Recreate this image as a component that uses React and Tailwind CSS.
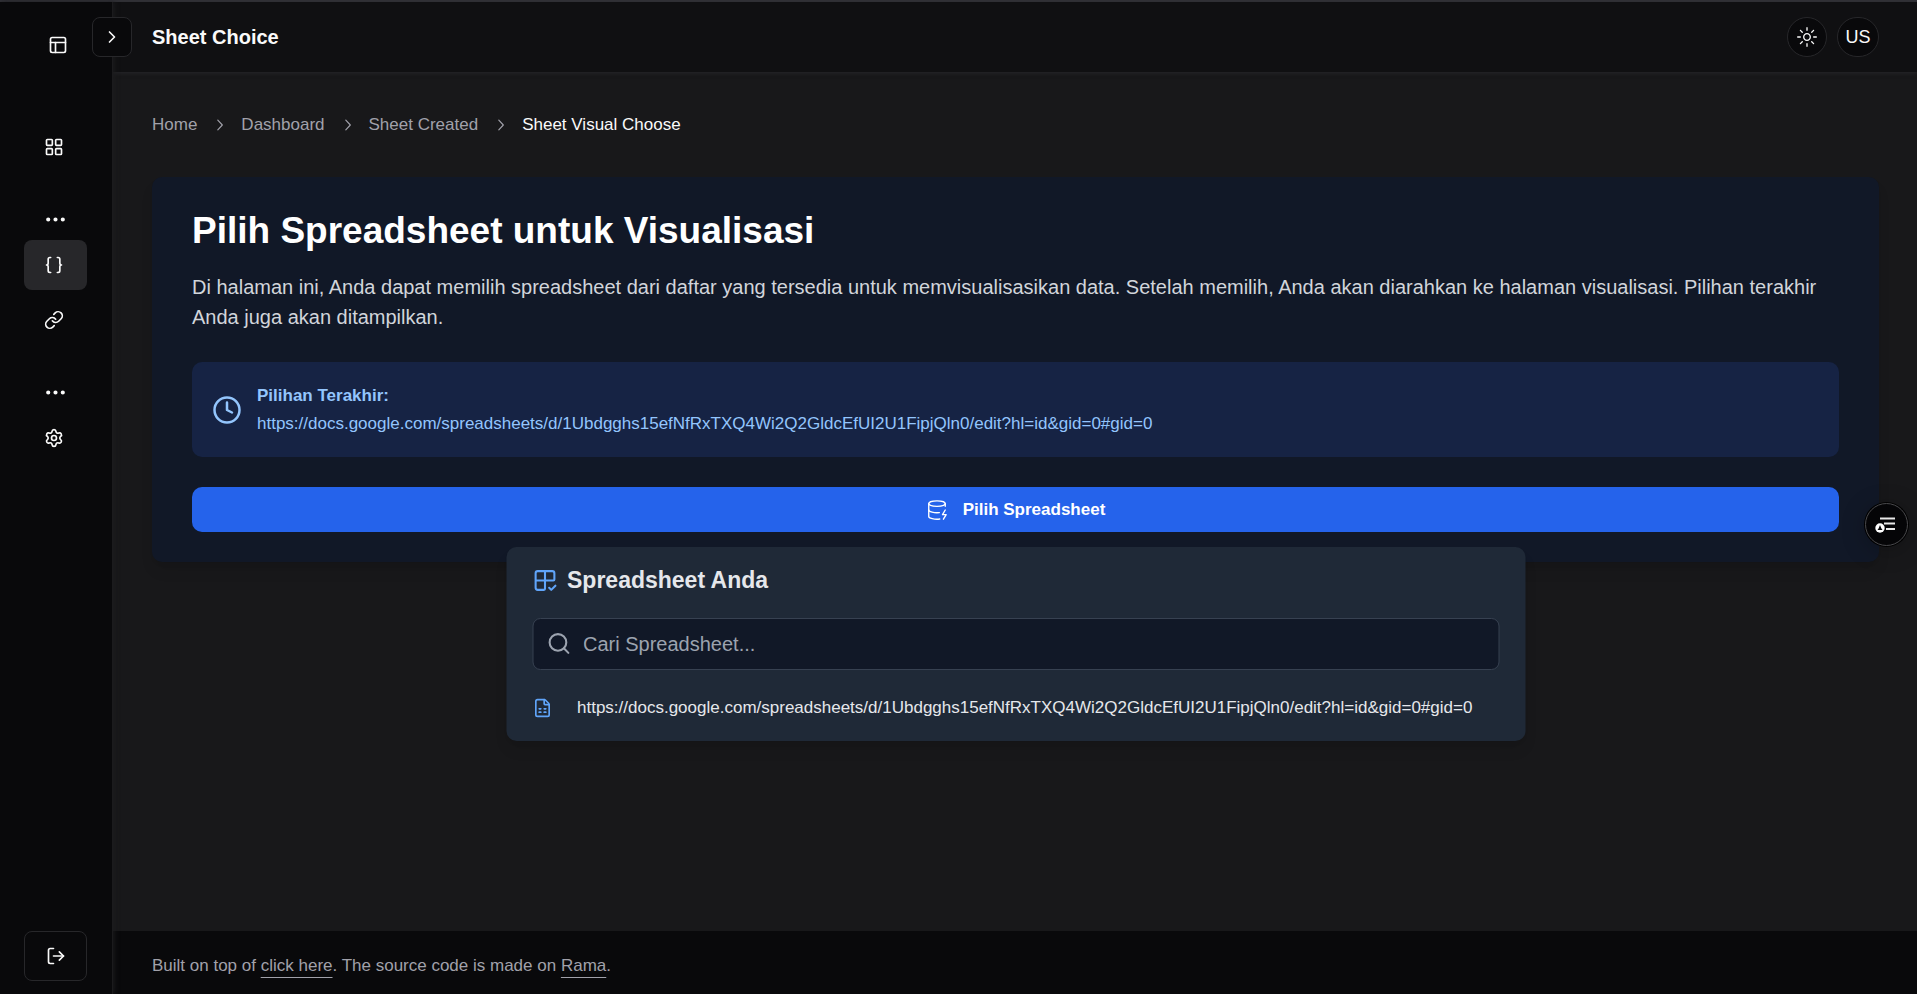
import React from "react";
import {
  PanelsTopLeft,
  LayoutGrid,
  Ellipsis,
  Braces,
  Link as LinkIcon,
  Settings,
  Clock,
  DatabaseZap,
  Grid2x2Check,
  Search,
  FileSpreadsheet,
  ChevronRight,
  LogOut,
} from "lucide-react";
import { RxChevronRight, RxSun } from "react-icons/rx";

const SHEET_URL =
  "https://docs.google.com/spreadsheets/d/1Ubdgghs15efNfRxTXQ4Wi2Q2GldcEfUI2U1FipjQln0/edit?hl=id&gid=0#gid=0";

const crumbs = ["Home", "Dashboard", "Sheet Created"];

function NavItem({ icon: Icon, label, active }) {
  return (
    <a
      href="#"
      aria-label={label}
      className={
        active
          ? "flex h-[50px] items-center rounded-lg bg-[#27272a] pl-5"
          : "flex h-[50px] items-center rounded-lg pl-5"
      }
    >
      <Icon size={20} />
    </a>
  );
}

function GroupDots() {
  return (
    <div className="flex h-[31px] items-center justify-center">
      <Ellipsis size={25} />
    </div>
  );
}

function Sidebar() {
  return (
    <aside className="relative z-20 flex w-[113px] shrink-0 flex-col border-r border-[#1b1b1d] bg-[#09090b] pt-[18px] pr-[25px] pb-[13px] pl-6 shadow-[1px_0_5px_0_#1c1c1f]">
      <a href="#" aria-label="Brand" className="flex h-[50px] items-center justify-center pl-1">
        <PanelsTopLeft size={20} />
      </a>
      <button
        type="button"
        aria-label="Open sidebar"
        className="absolute top-[15px] left-[92px] flex size-10 items-center justify-center rounded-lg border border-[#27272a] bg-[#09090b]"
      >
        <ChevronRight size={20} />
      </button>
      <nav className="mt-[52px] flex flex-1 flex-col">
        <NavItem icon={LayoutGrid} label="Dashboard" />
        <div className="mt-8 flex flex-col gap-[5px]">
          <GroupDots />
          <NavItem icon={Braces} label="Sheet visual" active />
          <NavItem icon={LinkIcon} label="Links" />
        </div>
        <div className="mt-8 flex flex-col gap-[5px]">
          <GroupDots />
          <NavItem icon={Settings} label="Settings" />
        </div>
      </nav>
      <button
        type="button"
        aria-label="Sign out"
        className="flex h-[50px] items-center justify-center rounded-lg border border-[#27272a]"
      >
        <LogOut size={20} />
      </button>
    </aside>
  );
}

function Header() {
  return (
    <header className="relative z-10 flex h-[70px] shrink-0 items-center justify-between bg-[#101012] pr-[38px] pl-[39px] shadow-[0_1px_4px_0_#27272a]">
      <h1 className="text-xl font-bold">Sheet Choice</h1>
      <div className="flex items-center gap-[10px]">
        <button
          type="button"
          aria-label="Toggle theme"
          className="flex size-10 items-center justify-center rounded-full border border-[#27272a] bg-[#09090b]"
        >
          <RxSun size={20} />
        </button>
        <button
          type="button"
          className="flex h-10 w-[42px] items-center justify-center rounded-full border border-[#27272a] bg-[#09090b] text-lg"
        >
          US
        </button>
      </div>
    </header>
  );
}

function Breadcrumb() {
  return (
    <nav aria-label="Breadcrumb">
      <ol className="flex items-center gap-[13px] text-[17px] leading-[25px] text-[#a1a1aa]">
        {crumbs.map((name) => (
          <React.Fragment key={name}>
            <li>
              <a href="#">{name}</a>
            </li>
            <li aria-hidden="true">
              <RxChevronRight size={18} />
            </li>
          </React.Fragment>
        ))}
        <li aria-current="page" className="text-[#fafafa]">
          Sheet Visual Choose
        </li>
      </ol>
    </nav>
  );
}

function SheetMenu() {
  return (
    <div className="absolute top-full left-1/2 mt-[15px] min-w-[1019px] -translate-x-1/2 rounded-[10px] bg-[#1f2937] px-[26px] pt-[18px] pb-[18px] shadow-lg">
      <h3 className="flex items-center gap-[10px] text-[23px] leading-[30px] font-bold text-[#e5e7eb]">
        <Grid2x2Check size={25} className="text-[#60a5fa]" />
        Spreadsheet Anda
      </h3>
      <div className="relative mt-[23px]">
        <Search size={25} className="absolute top-[13px] left-[14px] text-[#9ca3af]" />
        <input
          type="text"
          aria-label="Cari Spreadsheet"
          placeholder="Cari Spreadsheet..."
          className="h-[52px] w-full rounded-lg border border-[#374151] bg-[#111827] pr-4 pl-[50px] text-xl placeholder:text-[#9ca3af] placeholder:opacity-100"
        />
      </div>
      <a href="#" className="mt-[23px] flex items-center text-[17px] leading-[30px] text-[#e5e7eb]">
        <FileSpreadsheet size={20} className="mr-[25px] shrink-0 text-[#60a5fa]" />
        <span className="whitespace-nowrap">{SHEET_URL}</span>
      </a>
    </div>
  );
}

function ChoiceCard() {
  return (
    <section className="mt-10 rounded-[10px] bg-[#111827] px-10 py-[30px] shadow-lg">
      <h2 className="text-[37px] leading-[47px] font-bold text-white">Pilih Spreadsheet untuk Visualisasi</h2>
      <p className="mt-[18px] text-xl leading-[30px] text-[#d1d5db]">
        Di halaman ini, Anda dapat memilih spreadsheet dari daftar yang tersedia untuk memvisualisasikan data. Setelah
        memilih, Anda akan diarahkan ke halaman visualisasi. Pilihan terakhir Anda juga akan ditampilkan.
      </p>
      <div className="mt-[30px] flex items-center gap-[15px] rounded-[10px] bg-[#162344] px-5 pt-5 pb-[19px] text-[#93c5fd]">
        <Clock size={30} />
        <div className="text-[17px] leading-[28px]">
          <p className="font-bold">Pilihan Terakhir:</p>
          <p>{SHEET_URL}</p>
        </div>
      </div>
      <div className="relative mt-[30px]">
        <button
          type="button"
          className="flex h-[45px] w-full items-center justify-center gap-[15px] rounded-[10px] bg-[#2563eb] text-[17px] font-bold text-white"
        >
          <DatabaseZap size={22} strokeWidth={1.5} />
          Pilih Spreadsheet
        </button>
        <SheetMenu />
      </div>
    </section>
  );
}

function Footer() {
  return (
    <footer className="flex h-[63px] shrink-0 items-center bg-[#09090b] px-[39px] pt-[6px] text-[17px] leading-[25px] text-[#a1a1aa]">
      <p>
        Built on top of{" "}
        <a href="#" className="underline underline-offset-[6px]">
          click here
        </a>
        . The source code is made on{" "}
        <a href="#" className="underline underline-offset-[6px]">
          Rama
        </a>
        .
      </p>
    </footer>
  );
}

export default function App() {
  return (
    <div className="flex min-h-screen flex-col border-t-2 border-[#323238] bg-[#18181a] font-['Liberation_Sans',Arial,sans-serif] text-[#fafafa]">
      <div className="flex flex-1">
        <Sidebar />
        <div className="flex min-w-0 flex-1 flex-col">
          <Header />
          <main className="flex-1 pt-10 pr-[38px] pl-[39px]">
            <Breadcrumb />
            <ChoiceCard />
          </main>
          <Footer />
        </div>
      </div>
      <button
        type="button"
        aria-label="Open page tools"
        className="fixed top-[503px] right-[9px] z-30 flex size-[43px] items-center justify-center rounded-full border border-[#4a4a4d] bg-[#050507] pr-1 shadow-[0_0_0_1px_#000,0_4px_24px_rgba(0,0,0,0.25)]"
      >
        <svg width="20" height="18" viewBox="0 0 20 18" fill="none" aria-hidden="true">
          <path d="M5 2.500h15M9 7.500h11M11 13h9" stroke="#e8e8e8" strokeWidth="2" />
          <circle cx="5" cy="12" r="4.700" fill="#fff" />
          <path d="M5 9l1.300 3.200L7.500 14h-5l1.200-1.800z" fill="#050507" />
        </svg>
      </button>
    </div>
  );
}
